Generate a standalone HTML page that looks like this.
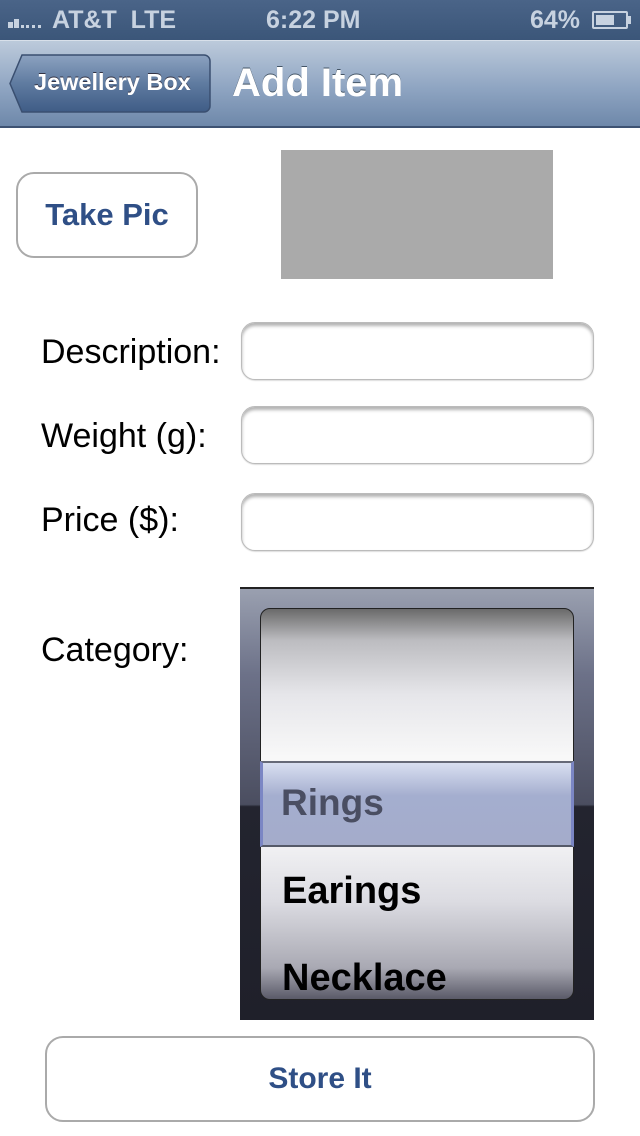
<!DOCTYPE html>
<html><head><meta charset="utf-8"><style>
*{margin:0;padding:0;box-sizing:border-box}
body{width:640px;height:1136px;background:#fff;font-family:"Liberation Sans",sans-serif;position:relative;overflow:hidden}
.abs{position:absolute}
.status{left:0;top:0;width:640px;height:40px;background:linear-gradient(#4a6488,#3b5679);color:#c7d2e0;font-weight:bold;font-size:25px}
.nav{left:0;top:40px;width:640px;height:88px;background:linear-gradient(#bccadb,#8fa5c2 55%,#6e88aa);border-top:1px solid #d8e0ea;border-bottom:2px solid #3d5272}
.lbl{font-size:34px;color:#000}
.field{left:241px;width:353px;height:58px;border-radius:14px;border:1px solid #bbb;box-shadow:inset 0 3px 3px rgba(0,0,0,.3),0 1px 1px #ddd;background:#fff}
.btn{border:2px solid #aaa;border-radius:18px;background:#fff;color:#2f4f86;font-weight:bold;font-size:31px;display:flex;align-items:center;justify-content:center}
</style></head><body>
<div class="abs status">
 <div class="abs" style="left:8px;top:22px;width:5px;height:6px;background:#c7d2e0"></div>
 <div class="abs" style="left:14px;top:19px;width:5px;height:9px;background:#c7d2e0"></div>
 <div class="abs" style="left:21px;top:25px;width:20px;height:3px;border-top:3px dotted #c7d2e0"></div>
 <div class="abs" style="left:52px;top:6px">AT&amp;T&nbsp;&nbsp;LTE</div>
 <div class="abs" style="left:266px;top:6px">6:22 PM</div>
 <div class="abs" style="left:530px;top:6px">64%</div>
 <div class="abs" style="left:592px;top:11px;width:36px;height:18px;border:2px solid #c7d2e0;border-radius:2px"><div style="margin:2px;width:18px;height:10px;background:#c7d2e0"></div></div>
 <div class="abs" style="left:628px;top:16px;width:3px;height:8px;background:#c7d2e0"></div>
</div>
<div class="abs nav">
 <svg class="abs" style="left:8px;top:13px" width="204" height="60"><path d="M14 1 H196 a6 6 0 0 1 6 6 V52 a6 6 0 0 1 -6 6 H14 L2 29.5 Z" fill="url(#g)" stroke="#3a4f70" stroke-width="1.5"/><defs><linearGradient id="g" x1="0" y1="0" x2="0" y2="1"><stop offset="0" stop-color="#8ca2c0"/><stop offset=".5" stop-color="#5f7ba0"/><stop offset="1" stop-color="#3f5c86"/></linearGradient></defs></svg>
 <div class="abs" style="left:34px;top:28px;color:#fff;font-weight:bold;font-size:23.5px;text-shadow:0 -1px 0 #334">Jewellery Box</div>
 <div class="abs" style="left:232px;top:20px;color:#fff;font-weight:bold;font-size:40px;text-shadow:0 -1px 0 #456">Add Item</div>
</div>
<div class="abs btn" style="left:16px;top:172px;width:182px;height:86px">Take Pic</div>
<div class="abs" style="left:281px;top:150px;width:272px;height:129px;background:#aaa"></div>
<div class="abs lbl" style="left:41px;top:333px">Description:</div>
<div class="abs lbl" style="left:41px;top:417px">Weight (g):</div>
<div class="abs lbl" style="left:41px;top:501px">Price ($):</div>
<div class="abs field" style="top:322px"></div>
<div class="abs field" style="top:406px"></div>
<div class="abs field" style="top:493px"></div>
<div class="abs lbl" style="left:41px;top:631px">Category:</div>
<div class="abs" style="left:240px;top:587px;width:354px;height:433px;background:linear-gradient(#9aa0b0 0%,#6c7188 20%,#4b4e60 50%,#23242f 50.5%,#1f202a 100%);border-top:2px solid #222"></div>
<div class="abs" style="left:260px;top:608px;width:314px;height:392px;border-radius:10px;border:1px solid #222;background:linear-gradient(#6a6a6a 0%,#bcbcc0 8%,#e6e6ea 22%,#f8f8f8 38%,#f2f2f4 60%,#dcdce2 75%,#a9a9b3 92%,#5a5a68 100%);overflow:hidden">
 <div class="abs" style="left:21px;top:261px;font-weight:bold;font-size:38px;color:#000">Earings</div>
 <div class="abs" style="left:21px;top:348px;font-weight:bold;font-size:38px;color:#000">Necklace</div>
</div>
<div class="abs" style="left:260px;top:761px;width:314px;height:86px;background:linear-gradient(rgba(215,222,240,.95),rgba(160,170,205,.95) 40%,rgba(160,168,200,.95));border-top:2px solid #666a78;border-bottom:2px solid #555a68;border-left:3px solid #7b86c4;border-right:3px solid #7b86c4"></div>
<div class="abs" style="left:281px;top:782px;font-weight:bold;font-size:37px;color:#4a4e62">Rings</div>
<div class="abs btn" style="left:45px;top:1036px;width:550px;height:86px;font-size:30px">Store It</div>
</body></html>
